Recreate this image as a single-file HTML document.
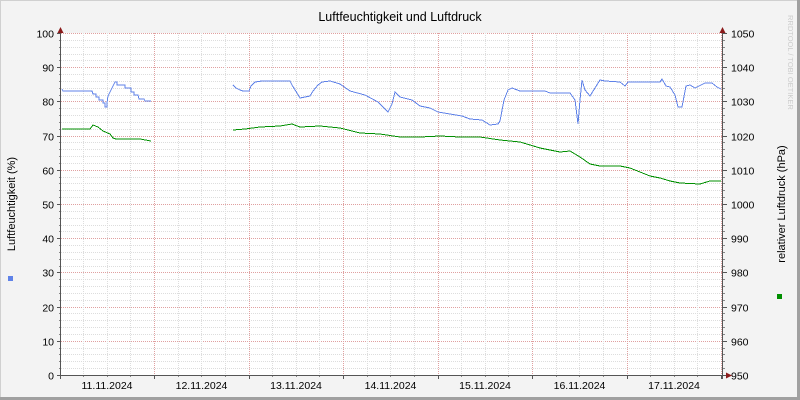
<!DOCTYPE html>
<html><head><meta charset="utf-8"><style>
body{margin:0;width:800px;height:400px;overflow:hidden;background:#f3f3f3}
svg{display:block}
text{font-family:"Liberation Sans","DejaVu Sans",sans-serif}
polyline{shape-rendering:crispEdges}
</style></head><body>
<svg id="s" width="800" height="400" xmlns="http://www.w3.org/2000/svg">
<rect x="0" y="0" width="800" height="400" fill="#f3f3f3"/>
<path d="M0.5 400V0.5H800" stroke="#d0d0d0" stroke-width="1" fill="none"/>
<path d="M0 398.5H798.5V0" stroke="#a0a0a0" stroke-width="3" fill="none"/>
<rect x="61" y="33" width="662" height="343" fill="#fff"/>
<g id="grid"></g>
<text x="400" y="21" font-size="12.5" text-anchor="middle" fill="#000">Luftfeuchtigkeit und Luftdruck</text>
<text transform="translate(15,204) rotate(-90)" font-size="11" text-anchor="middle">Luftfeuchtigkeit (%)</text>
<text transform="translate(785,204) rotate(-90)" font-size="11" text-anchor="middle">relativer Luftdruck (hPa)</text>
<text transform="translate(788,15) rotate(90)" font-size="7.5" fill="#ccc">RRDTOOL / TOBI OETIKER</text>
<rect x="8" y="276" width="5" height="5" fill="#5f82e8"/>
<rect x="777" y="294" width="5" height="5" fill="#008f00"/>
<polyline fill="none" stroke="#5f82e8" stroke-width="1" points="62,89 63,91 92,91 93,94 96,94 96,97 99,97 99,100 103,100 103,103 105,103 105,107 107,107 107,103 108,96 111,90 113,86 115,82 117,82 117,85 125,85 125,88 131,88 131,92 134,92 134,95 138,95 139,99 144,99 145,101 151,101"/>
<polyline fill="none" stroke="#5f82e8" stroke-width="1" points="233,85 236,88 240,90 243,91 249,91 251,86 255,82 262,81 290,81 292,85 297,93 300,98 310,96 313,91 318,85 322,82 330,81 340,84 350,91 365,95 378,102 388,112 392,104 395,92 400,97 412,100 420,106 430,108 438,112 450,114 462,116 470,119 482,120 490,125 498,124 500,121 504,100 508,90 512,88 520,91 545,91 550,93 570,93 575,100 578,124 580,100 582,80 585,90 590,96 595,88 600,80 605,81 620,82 625,86 628,82 660,82 662,79 666,86 670,87 675,95 678,107 682,107 686,86 690,85 695,88 705,83 712,83 717,87 721,89"/>
<polyline fill="none" stroke="#008f00" stroke-width="1" points="62,129 90,129 93,125 98,127 103,131 110,134 113,138 116,139 125,139 140,139 151,141"/>
<polyline fill="none" stroke="#008f00" stroke-width="1" points="233,130 245,129 260,127 280,126 292,124 300,127 320,126 340,128 360,133 380,134 400,137 420,137 440,136 460,137 480,137 500,140 520,142 540,148 560,152 570,151 580,157 590,164 600,166 620,166 630,168 640,172 650,176 660,178 670,181 680,183 700,184 710,181 721,181"/>
</svg>
<script>
var g=document.getElementById('grid'),h='';
function ln(x1,y1,x2,y2,c,d){h+='<line x1="'+x1+'" y1="'+y1+'" x2="'+x2+'" y2="'+y2+'" stroke="'+c+'" stroke-width="1"'+(d?' stroke-dasharray="1,1"':'')+'/>';}
function tx(x,y,t,a){h+='<text x="'+x+'" y="'+y+'" font-size="10.5" text-anchor="'+a+'">'+t+'</text>';}
for(var v=0;v<=100;v+=2){var y=Math.round(375-v*3.42)+0.5;
 if(v%10==0){ if(v>0) ln(61,y,722,y,'#e0a0a0',1); ln(57,y,61,y,'#555'); ln(723,y,727,y,'#555');
   tx(54,y+4,v,'end'); tx(731,y+4,950+v,'start');}
 else { ln(61,y,722,y,'#ddd',1); ln(59,y,61,y,'#888'); ln(723,y,725,y,'#888');}}
var days=['11','12','13','14','15','16','17'];
for(var k=-3;k<=24;k++){var x=Math.round(154+k*23.625)+0.5; if(x<62||x>722)continue;
 if(k%4==0){ln(x,33,x,375,'#e0a0a0',1);ln(x,375,x,379,'#555');} else {ln(x,33,x,375,'#ddd',1);ln(x,375,x,377,'#888');}}
for(var i=0;i<7;i++) tx(107+i*94.5,389,days[i]+'.11.2024','middle');
ln(60.5,30,60.5,379,'#555');ln(722.5,30,722.5,379,'#555');ln(57,375.5,727,375.5,'#555');
h+='<path d="M57.5 33L60.5 27L63.5 33Z" fill="#8b1a1a"/><path d="M719.5 33L722.5 27L725.5 33Z" fill="#8b1a1a"/><path d="M726 372.5L732 375.5L726 378.5Z" fill="#8b1a1a"/>';
g.innerHTML=h;
</script>
</body></html>
